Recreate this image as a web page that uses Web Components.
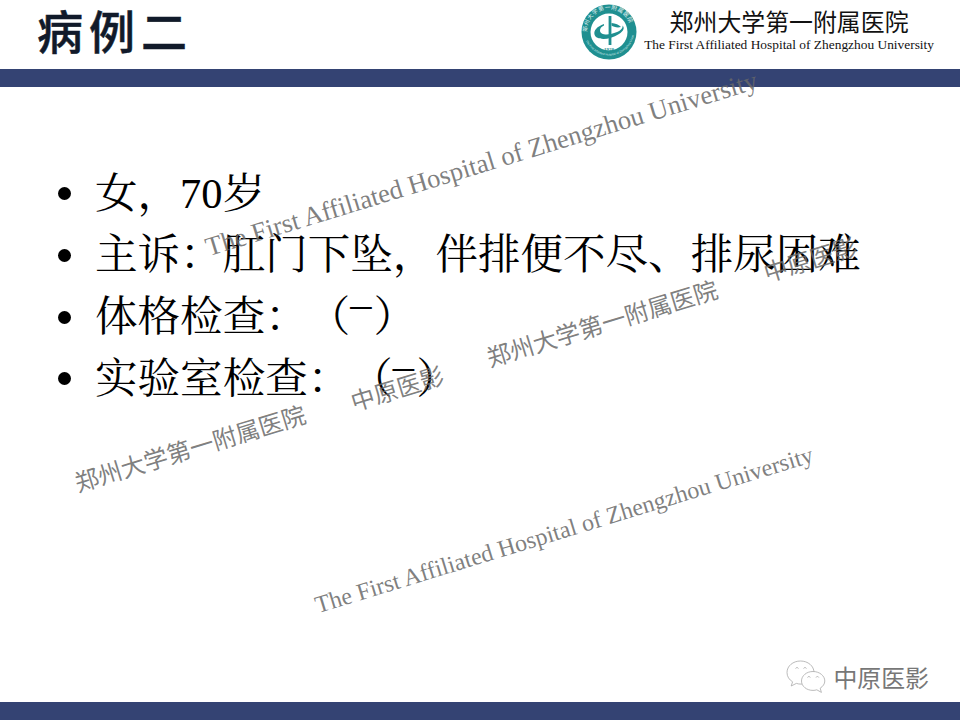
<!DOCTYPE html>
<html lang="zh">
<head>
<meta charset="utf-8">
<title>病例二</title>
<style>
    html, body { margin: 0; padding: 0; background: #fff; }
    .dash {
        display: inline-block;
        margin-right: 2px;
        transform: translateY(-.3em);
    }
</style>
</head>
<body>
<slide-page>
    <slide-header slot="header" title="病例二"></slide-header>
    <bullet-item>女，70岁</bullet-item>
    <bullet-item>主诉：肛门下坠，伴排便不尽、排尿困难</bullet-item>
    <bullet-item>体格检查：（<span class="dash">–</span>）</bullet-item>
    <bullet-item>实验室检查：（<span class="dash">–</span>）</bullet-item>
    <water-mark slot="marks" x="211" y="232" size="26.6">The First Affiliated Hospital of Zhengzhou University</water-mark>
    <water-mark slot="marks" x="769" y="260" size="24">中原医影</water-mark>
    <water-mark slot="marks" x="492" y="345" size="24">郑州大学第一附属医院</water-mark>
    <water-mark slot="marks" x="356" y="389" size="24">中原医影</water-mark>
    <water-mark slot="marks" x="80" y="470" size="24">郑州大学第一附属医院</water-mark>
    <water-mark slot="marks" x="320" y="591" size="24">The First Affiliated Hospital of Zhengzhou University</water-mark>
    <account-mark slot="footer"></account-mark>
</slide-page>

<script>
class SlidePage extends HTMLElement {
    constructor() {
        super()
        this.attachShadow({ mode: 'open' })
        this.shadowRoot.innerHTML = `
            <style>
                :host {
                    display: grid;
                    grid-template-rows: 69px 18px 1fr auto 18px;
                    position: relative;
                    width: 960px;
                    height: 720px;
                    overflow: hidden;
                    background: #fff;
                }
                .bar { background: #344373; }
                main {
                    padding: 76px 0 0 56px;
                }
                footer {
                    display: flex;
                    justify-content: flex-end;
                    padding: 0 31px 8px 0;
                }
            </style>
            <slot name="header"></slot>
            <div class="bar"></div>
            <main><slot></slot></main>
            <footer><slot name="footer"></slot></footer>
            <div class="bar"></div>
            <slot name="marks"></slot>
        `
    }
}

class SlideHeader extends HTMLElement {
    constructor() {
        super()
        this.attachShadow({ mode: 'open' })
        this.shadowRoot.innerHTML = `
            <style>
                :host {
                    display: flex;
                    justify-content: space-between;
                    align-items: center;
                    padding: 0 26px 0 37px;
                }
                h1 {
                    margin: 0 0 11px;
                    font: 500 46px/56px "Noto Sans CJK SC", sans-serif;
                    -webkit-text-stroke: .5px #111a2a;
                    letter-spacing: 6px;
                    color: #111a2a;
                }
                .brand {
                    display: flex;
                    align-items: center;
                    gap: 6px;
                }
                .names {
                    display: flex;
                    flex-direction: column;
                    align-items: center;
                    margin-bottom: 9px;
                }
                .cn {
                    font: 400 23.9px/30px "Noto Sans CJK SC", sans-serif;
                    color: #111;
                    white-space: nowrap;
                }
                .en {
                    font: 400 13.4px/18px "Liberation Serif", serif;
                    color: #111;
                    white-space: nowrap;
                }
                svg { display: block; margin-bottom: 6px; }
            </style>
            <h1></h1>
            <div class="brand">
                <svg width="58" height="58" viewBox="0 0 58 58">
                    <defs>
                        <path id="top" d="M7.5 33 A22 22 0 1 1 50.5 33"/>
                        <path id="bottom" d="M4 32 A25.5 25.5 0 0 0 54 32"/>
                    </defs>
                    <circle cx="29" cy="29" r="27.5" fill="#1f8f90"/>
                    <circle cx="29" cy="29" r="18.5" fill="#fff"/>
                    <text font-family="Noto Sans CJK SC, sans-serif" font-size="5.6" fill="#e6f3f3" letter-spacing=".6">
                        <textPath href="#top" startOffset="4">郑州大学第一附属医院</textPath>
                    </text>
                    <text font-family="Liberation Sans, sans-serif" font-size="3" fill="#cfe8e8">
                        <textPath href="#bottom" startOffset="6">The First Affiliated Hospital of Zhengzhou University</textPath>
                    </text>
                    <path d="M30 13 V42" stroke="#1f8f90" stroke-width="2.8" fill="none"/>
                    <path d="M24 21 C17 23.5 13.5 27.5 14.5 31.5 C16 37 28 38 39 31 C43.5 28 45 25 42.5 22.5 C43.5 26.5 37.5 29.5 31 31 C25 32.2 20 31 20 27.5 C20 25.3 21.5 23.5 24 22.5 Z" fill="#1f8f90"/>
                    <path d="M31.5 20 C35.5 20.5 39 21.5 41 24 C37.5 25 33.5 24 31.5 22.5 Z" fill="#1f8f90"/>
                    <text x="29" y="47.5" text-anchor="middle" font-family="Liberation Serif, serif" font-weight="700" font-size="5" fill="#1f8f90">1928</text>
                </svg>
                <div class="names">
                    <div class="cn">郑州大学第一附属医院</div>
                    <div class="en">The First Affiliated Hospital of Zhengzhou University</div>
                </div>
            </div>
        `
        this.shadowRoot.querySelector('h1').textContent = this.getAttribute('title')
    }
}

class BulletItem extends HTMLElement {
    constructor() {
        super()
        this.attachShadow({ mode: 'open' })
        this.shadowRoot.innerHTML = `
            <style>
                :host {
                    display: flex;
                    align-items: center;
                    gap: 24px;
                    height: 61.7px;
                    font: 400 42.55px/1 "Liberation Serif", "Noto Serif CJK SC", "Noto Sans CJK SC", serif;
                    text-spacing-trim: space-all;
                    color: #000;
                    white-space: nowrap;
                }
                .dot {
                    flex: none;
                    width: 13px;
                    height: 13px;
                    margin-left: 2px;
                    border-radius: 50%;
                    background: #000;
                }
            </style>
            <span class="dot"></span>
            <span><slot></slot></span>
        `
    }
}

class WaterMark extends HTMLElement {
    constructor() {
        super()
        this.attachShadow({ mode: 'open' })
        this.shadowRoot.innerHTML = `
            <style>
                :host {
                    position: absolute;
                    left: ${this.getAttribute('x')}px;
                    top: ${this.getAttribute('y')}px;
                    transform: rotate(-17deg);
                    transform-origin: 0 100%;
                    font: 400 ${this.getAttribute('size')}px/1.2 "Liberation Serif", "Noto Sans CJK SC", serif;
                    color: rgba(105, 105, 105, 0.85);
                    white-space: nowrap;
                }
            </style>
            <slot></slot>
        `
    }
}

class AccountMark extends HTMLElement {
    constructor() {
        super()
        this.attachShadow({ mode: 'open' })
        this.shadowRoot.innerHTML = `
            <style>
                :host {
                    display: flex;
                    align-items: center;
                    gap: 7px;
                    font: 400 23.9px/34px "Noto Sans CJK SC", sans-serif;
                    color: #777;
                }
                svg { display: block; }
            </style>
            <svg width="40" height="34" viewBox="0 0 40 34" fill="#fff" stroke="#aaa" stroke-width=".8">
                <path d="M14.5 1 C7 1 1 6 1 12.5 C1 16.5 3.2 19.8 6.6 21.8 L5.2 26 L10.4 23.4 C12 23.9 13.4 24.1 15 24.1 C22 24.1 28 19 28 12.5 C28 6 22 1 14.5 1 Z"/>
                <path d="M27 11.5 C20.5 11.5 15.5 15.8 15.5 21 C15.5 26.2 20.5 30.4 27 30.4 C28.3 30.4 29.6 30.2 30.8 29.8 L35.4 32.4 L34.2 28.2 C37 26.4 38.8 23.8 38.8 21 C38.8 15.8 33.5 11.5 27 11.5 Z"/>
                <path d="M9.5 8.5 a1.7 1.7 0 0 1 3 0 M17.5 8.5 a1.7 1.7 0 0 1 3 0 M21.5 17.5 a1.5 1.5 0 0 1 2.8 0 M30 17.5 a1.5 1.5 0 0 1 2.8 0" fill="none"/>
            </svg>
            <span>中原医影</span>
        `
    }
}

customElements.define('slide-page', SlidePage)
customElements.define('slide-header', SlideHeader)
customElements.define('bullet-item', BulletItem)
customElements.define('water-mark', WaterMark)
customElements.define('account-mark', AccountMark)
</script>
</body>
</html>
